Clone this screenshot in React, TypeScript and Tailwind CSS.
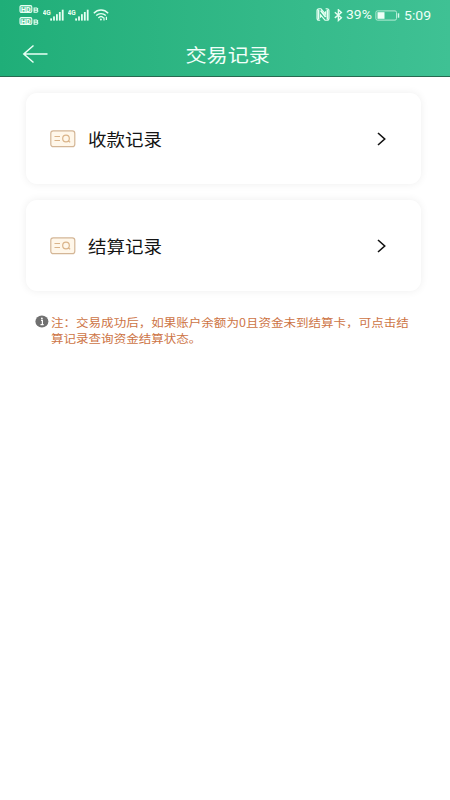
import React from "react";

function Signal() {
  return (
    <svg width="22" height="14" viewBox="0 0 22 14" className="shrink-0">
      <text x="-0.6" y="7" fontSize="7.5" fontWeight="700" fill="#e6fff2" fontFamily="Roboto, sans-serif" textLength="8.2" lengthAdjust="spacingAndGlyphs">4G</text>
      <g fill="#e6fff2">
        <rect x="7.2" y="10.4" width="1.8" height="2.2" />
        <rect x="10.1" y="8.4" width="1.8" height="4.2" />
        <rect x="13" y="6.2" width="1.8" height="6.4" />
        <rect x="15.9" y="4" width="1.8" height="8.6" />
        <rect x="18.8" y="1.7" width="1.8" height="10.9" />
      </g>
    </svg>
  );
}

function HdBadge() {
  return (
    <svg width="20" height="8" viewBox="0 0 20 8">
      <rect x="1" y="0.6" width="11.8" height="6.8" rx="1.4" fill="#e6fff2" fillOpacity="0.25" stroke="#e6fff2" strokeWidth="1.1" />
      <text x="2.1" y="6.6" fontSize="7.4" fontWeight="700" fill="#f2fff9" fontFamily="Roboto, sans-serif" textLength="9.6" lengthAdjust="spacingAndGlyphs">HD</text>
      <path d="M15.1 3h2.6l1 .9-.7 1.2.9 1-.9 1.2h-2.900ZM15.100 5.100h2.700" fill="none" stroke="#e6fff2" strokeWidth="1.1" />
    </svg>
  );
}

function StatusBar() {
  return (
    <div className="flex h-[31px] items-start text-[#effff7]">
      <div className="ml-[19px] mt-[5px] flex flex-col gap-[4px]">
        <HdBadge />
        <HdBadge />
      </div>
      <div className="ml-[4px] mt-[8px] flex gap-[3px]">
        <Signal />
        <Signal />
      </div>
      <svg width="17" height="13" viewBox="0 0 17 13" fill="none" stroke="#e6fff2" strokeWidth="1.4" className="ml-[3px] mt-[9px]">
        <path d="M.8 4.2C5 0 11 0 15.2 4.2M3.2 6.6c2.7-2.7 6.9-2.7 9.6 0M5.4 8.9c1.5-1.5 3.7-1.5 5.2 0" />
        <circle cx="7.9" cy="10.6" r="1" fill="#e6fff2" stroke="none" />
        <path d="M11 8.6v3M13.4 7.8v3.2" strokeWidth="1.2" />
      </svg>
      <svg width="14" height="13" viewBox="0 0 14 13" fill="none" className="ml-auto mt-[8px]">
        <path d="M3 .8h2l4.600 5.400V3.200M4.200 12.200H3C1.800 12.200 1 11.400 1 10.200V2.800C1 1.600 1.800.8 3 .8M9.600.8H11c1.200 0 2 .8 2 2v7.400c0 1.200-.8 2-2 2H9L4.500 6.800v3" stroke="#e6fff2" strokeWidth="1.1" />
        <path d="M2.500 1.500v10M11.500 1.500v10M4.700 2.500l5 6.500" stroke="#e6fff2" strokeWidth="1.8" />
      </svg>
      <svg width="9" height="13" viewBox="0 0 9 13" fill="none" stroke="#e6fff2" strokeWidth="1.4" className="ml-[4px] mt-[9px]">
        <path d="M.8 3.2l6.6 5.6-3 2.7V.8l3 2.7L.8 8.9" />
      </svg>
      <div className="ml-[3px] mt-[7px] w-[26px]">
        <div className="origin-left scale-x-[1.07] whitespace-nowrap font-['Roboto',sans-serif] text-[13px] leading-4">39%</div>
      </div>
      <svg width="25" height="11" viewBox="0 0 25 11" className="ml-[3px] mt-[10px]">
        <rect x="0.9" y="0.9" width="20.6" height="9.2" rx="1.5" fill="none" stroke="#b4ecd5" />
        <rect x="2.5" y="2.2" width="7" height="6.6" fill="#effff7" />
        <path d="M23.5 3.3v4.4" stroke="#d9f9ec" strokeWidth="1.5" />
      </svg>
      <div className="ml-[4px] mr-[21px] mt-[7px] w-[25px]">
        <div className="origin-left scale-x-[1.04] whitespace-nowrap font-['Roboto',sans-serif] text-[13.5px] leading-4">5:09</div>
      </div>
    </div>
  );
}

function RecordCard({ label }: { label: string }) {
  return (
    <button className="flex h-[91px] w-full items-center rounded-[11px] bg-white pl-[24px] pr-[34px] shadow-[0_0_8px_rgba(0,0,0,0.07)]">
      <svg width="26" height="18" viewBox="0 0 26 18" fill="none" stroke="#dab48a" strokeWidth="1.2" className="shrink-0">
        <rect x="0.8" y="0.9" width="24" height="15.8" rx="2.5" fill="#fff7ea" stroke="#d4b696" strokeWidth="1.2" />
        <path d="M4.5 6.5H10M4.500 10.5H10" />
        <circle cx="16" cy="8.5" r="3.3" />
        <path d="M18.3 10.9l1.900 1.300" />
      </svg>
      <span className="ml-[12px] origin-left scale-x-[1.122] whitespace-nowrap font-['Noto_Sans_CJK_SC',sans-serif] text-[16.5px] leading-6 text-[#151515]">
        {label}
      </span>
      <svg width="11" height="16" viewBox="0 0 11 16" fill="none" stroke="#111111" strokeWidth="1.6" className="ml-auto">
        <path d="M2 2l6.700 6L2 14" />
      </svg>
    </button>
  );
}

export default function App() {
  return (
    <div className="h-[800px] w-[450px] overflow-hidden bg-white">
      <header className="h-[77px] border-b border-[#276a50] bg-linear-to-r from-[#1fae78] to-[#3fc194]">
        <StatusBar />
        <div className="grid h-[45px] grid-cols-[1fr_auto_1fr] items-center">
          <svg width="27" height="20" viewBox="0 0 27 20" fill="none" stroke="#e9fff5" strokeWidth="1.5" className="ml-[22px]">
            <path d="M11.5 1.5L1.8 10l9.7 8.5M2 10h23.5" />
          </svg>
          <h1 className="scale-x-[1.13] pl-[4px] font-['Noto_Sans_CJK_SC',sans-serif] text-[18.7px] leading-6 text-[#f1fff9]">交易记录</h1>
        </div>
      </header>
      <main className="pl-[26px] pr-[29px] pt-[16px]">
        <div className="flex flex-col gap-[16px]">
          <RecordCard label="收款记录" />
          <RecordCard label="结算记录" />
        </div>
        <div className="mt-[23px] flex items-start pl-[9px]">
          <svg width="14" height="13" viewBox="0 0 14 13" className="mt-px shrink-0">
            <ellipse cx="6.9" cy="6.5" rx="6.5" ry="5.9" fill="#707070" />
            <path d="M6 5.4h1.4v4M5.5 9.6h3.200" fill="none" stroke="#fff" strokeWidth="1.2" />
            <circle cx="6.9" cy="3.4" r="0.9" fill="#fff" />
          </svg>
          <p className="ml-[2px] origin-left scale-x-[1.109] whitespace-nowrap font-['Noto_Sans_CJK_SC',sans-serif] text-[11.3px] leading-[16px] text-[#cd7445]">
            注：交易成功后，如果账户余额为0且资金未到结算卡，可点击结
            <br />
            算记录查询资金结算状态。
          </p>
        </div>
      </main>
    </div>
  );
}
